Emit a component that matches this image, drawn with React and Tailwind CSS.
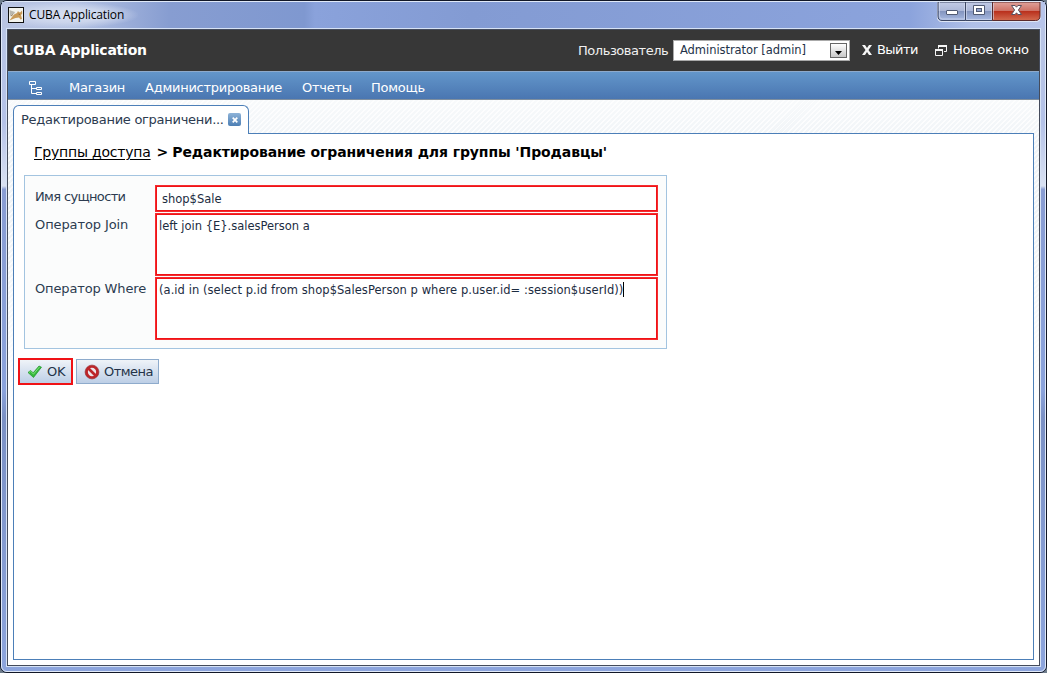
import React from "react";

function CatIcon() {
  return (
    <svg width="16" height="16" viewBox="0 0 16 16" className="shrink-0">
      <rect x="0.5" y="0.5" width="15" height="15" fill="#f4f4ee" stroke="#111" />
      <path d="M1.500 3l2.500 1 3 1-1 2-3 1-1 2z" fill="#b9b7ad" />
      <path d="M1.500 13.500L4 10l2-2.500L9 6l1-2 1 1.300h1.500L14 3.500l.3 3L13 8l1 4-1.500.5L11 10.500 7.500 11 5 12z" fill="#c99a57" />
      <path d="M3 9l2-1.500M10.500 7l1.500.5" stroke="#7d5a30" strokeWidth=".8" fill="none" />
    </svg>
  );
}

function WindowControls() {
  return (
    <svg width="104" height="20" viewBox="0 0 104 20">
      <defs>
        <linearGradient id="glass" x1="0" y1="0" x2="0" y2="1">
          <stop offset="0" stopColor="#c2cbe6" />
          <stop offset=".48" stopColor="#abb7d8" />
          <stop offset=".5" stopColor="#8394be" />
          <stop offset="1" stopColor="#a9bbe3" />
        </linearGradient>
        <linearGradient id="closeRed" x1="0" y1="0" x2="0" y2="1">
          <stop offset="0" stopColor="#e0a29b" />
          <stop offset=".46" stopColor="#cf7468" />
          <stop offset=".5" stopColor="#b92f1c" />
          <stop offset="1" stopColor="#d36c50" />
        </linearGradient>
      </defs>
      <path d="M.5 0v15q0 4.500 4 4.500H99q4.500 0 4.500-4.500V0" fill="#dfe6f6" stroke="#dfe6f6" />
      <path d="M1 0v14q0 4.500 4 4.500H28.500V0z" fill="url(#glass)" stroke="#3c4764" />
      <path d="M28.500 0h27v18.500h-27z" fill="url(#glass)" stroke="#3c4764" />
      <path d="M55.500 0v18.500H98.500q4.500 0 4.500-4.500V0z" fill="url(#closeRed)" stroke="#5b2a2c" />
      <path d="M2.500 0v14q0 3 3 3H27.500V1M29.500 1v16.500h25V1M56.500 1v16.500" fill="none" stroke="#d7def0" strokeOpacity=".6" />
      <rect x="9.500" y="8.500" width="11" height="4" rx=".5" fill="#fff" stroke="#505a73" />
      <path d="M36.500 3.500h11v9h-11z" fill="#fff" stroke="#505a73" />
      <rect x="39.500" y="6.500" width="5" height="3" fill="#93a4ce" stroke="#505a73" />
      <path d="M74.500 3.500h3.600l1.400 1.700 1.400-1.700h3.600l-3.100 4.500 3.100 4.500h-3.600l-1.400-1.700-1.400 1.700h-3.600l3.100-4.500z" fill="#fff" stroke="#59505f" />
    </svg>
  );
}

function TitleBar() {
  return (
    <div className="flex h-[26px] shrink-0 items-start justify-between bg-[linear-gradient(90deg,#bac5e3_0%,#b4c2e3_7%,#879dd1_16%,#7f98d0_29%,#8aa2db_30%,#839bd3_45%,#8ba3dc_87%,#b0c0e8_93%,#b8c5ea_100%)] pl-1.5">
      <div className="flex h-[26px] w-[130px] items-center gap-[5px] bg-[radial-gradient(ellipse_at_45%_50%,#d9e0f1_0%,#cbd5ec_40%,transparent_72%)]">
        <CatIcon />
        <span className="whitespace-nowrap font-['Open_Sans',sans-serif] text-[12px] leading-4 tracking-[-0.140px] text-black">CUBA Application</span>
      </div>
      <div className="mr-[4px] h-5"><WindowControls /></div>
    </div>
  );
}

function Header() {
  return (
    <div className="flex h-[41px] shrink-0 items-center bg-[#373737] pb-px text-[13px] text-white">
      <span className="ml-[5px] whitespace-nowrap text-[14px] font-bold tracking-[-0.220px]">CUBA Application</span>
      <span className="ml-auto mr-[5px] w-[90px] whitespace-nowrap pt-px tracking-[-0.450px] text-[#f0f0f0]">Пользователь</span>
      <div className="mt-px flex h-[21px] w-[177px] items-center justify-between border border-[#aaa] bg-white pl-1.5 pr-[2px] text-[11.500px] text-[#233248]">
        <span className="whitespace-nowrap tracking-[-0.050px]">Administrator [admin]</span>
        <span className="flex h-[15px] w-[17px] items-center justify-center border border-[#666] bg-gradient-to-b from-white to-[#c8c8c8]">
          <svg width="7" height="4" className="mt-1"><path d="M0 0h7L3.500 4z" fill="#000" /></svg>
        </span>
      </div>
      <svg className="ml-3 mr-[5px] shrink-0" width="10" height="10" viewBox="0 0 10 10">
        <path d="M0 0h3l2 3 2-3h3L6.500 5l3.500 5H7L5 7l-2 3H0l3.500-5z" fill="#f5f5f5" />
      </svg>
      <span className="w-[41px] whitespace-nowrap pb-px tracking-[-0.550px]">Выйти</span>
      <svg className="ml-[17px] mr-1.5 shrink-0" width="12" height="11" viewBox="0 0 12 11" fill="none" stroke="#f5f5f5">
        <path d="M3.500 3.500V1M11.500 1v5.500H9" />
        <path d="M3 1h9" strokeWidth="2" />
        <path d="M.5 4v6.500h7V4" />
        <path d="M0 5h8" strokeWidth="2" />
      </svg>
      <span className="mr-[10px] w-[76px] whitespace-nowrap pb-px tracking-[-0.200px]">Новое окно</span>
    </div>
  );
}

function MenuBar() {
  return (
    <div className="flex h-[29px] shrink-0 items-center border-b border-t border-b-[#7f8f9f] border-t-[#8eaacb] bg-gradient-to-b from-[#6396ca] to-[#4a76b1] pt-[4px] text-[13px] tracking-[-0.250px] text-white">
      <svg className="ml-[21px] mr-[26px] shrink-0" width="14" height="16" viewBox="0 0 14 16" fill="none" stroke="#fff">
        <path d="M.5 1.500h6v3h-6zM2.500 4.500v9h5M2.500 8.500h5M7.500 7.500h5v2h-5zM7.500 12.500h5v2h-5z" />
      </svg>
      <span className="w-[76px] whitespace-nowrap">Магазин</span>
      <span className="w-[157px] whitespace-nowrap">Администрирование</span>
      <span className="w-[69px] whitespace-nowrap">Отчеты</span>
      <span className="whitespace-nowrap">Помощь</span>
    </div>
  );
}

function Tab() {
  return (
    <div className="relative mb-[-1px] flex h-[29px] w-[236px] items-center rounded-t-[6px] border border-b-0 border-[#4c7fb8] bg-white pl-[7px] text-[13px] text-[#2c3b50]">
      <span className="w-[207px] whitespace-nowrap tracking-[-0.280px]">Редактирование ограничени...</span>
      <span className="mb-px flex h-[13px] w-[13px] items-center justify-center rounded-[2px] bg-gradient-to-b from-[#8eb3d8] to-[#4d7fb4]">
        <svg width="6" height="6" viewBox="0 0 6 6"><path d="M.7.7l4.600 4.600M5.300.7L.7 5.300" stroke="#fff" strokeWidth="1.700" /></svg>
      </span>
    </div>
  );
}

function Field({ label, labelStyle, height, children }) {
  return (
    <div className="flex items-start">
      <span className={"mt-1 w-[120px] shrink-0 whitespace-nowrap text-[13px] leading-4 text-[#2c3b50] " + labelStyle}>{label}</span>
      <div className={"w-[503px] border-2 border-[#f01216] bg-white text-[11.500px] leading-4 text-[#1c2c42] outline-1 -outline-offset-1 outline-[#ff6b6b]/30 " + height}>{children}</div>
    </div>
  );
}

function EditForm() {
  return (
    <div className="ml-[10px] mt-[13px] flex h-[174px] w-[643px] flex-col gap-[1px] border border-[#a3c4e0] bg-[#fbfcfc] pl-[10px] pt-[9px]">
      <Field label="Имя сущности" labelStyle="tracking-[-0.650px]" height="h-[27px] pl-[5px] pt-[4px]">shop$Sale</Field>
      <Field label="Оператор Join" labelStyle="tracking-[-0.100px]" height="h-[63px] pl-[2px] pt-[3px]">left join {"{E}"}.salesPerson a</Field>
      <Field label="Оператор Where" labelStyle="tracking-[-0.140px]" height="h-[63px] pl-[2px] pt-[3px]">
        <span className="inline-block h-[15px] whitespace-nowrap border-r border-black leading-4 tracking-[0.055px]">(a.id in (select p.id from shop$SalesPerson p where p.user.id= :session$userId))</span>
      </Field>
    </div>
  );
}

function Actions() {
  return (
    <div className="ml-1 mt-[9px] flex items-center gap-[3px] text-[13px] text-[#233248]">
      <div className="flex h-[27px] w-[55px] items-center gap-1 border-2 border-[#f01216] bg-gradient-to-b from-[#eff3f8] to-[#bdcfe6] pl-[7px]">
        <svg width="16" height="16" viewBox="0 0 16 16">
          <path d="M1 8.500L3.500 6.500l2.700 2.300L12 2l2.500 1.200L6.500 13.500z" fill="#35b93c" stroke="#20932b" strokeWidth=".7" />
          <path d="M2 8.500L3.500 7.300l3 2.700L12.500 3" stroke="#7ddf79" fill="none" />
        </svg>
        <span className="tracking-[-0.300px]">OK</span>
      </div>
      <div className="flex h-[25px] w-[83px] items-center gap-1 border border-[#8eabcc] bg-gradient-to-b from-[#eff3f8] to-[#bdcfe6] pl-[7px]">
        <svg width="16" height="16" viewBox="0 0 16 16">
          <circle cx="8" cy="8" r="5.500" fill="#ece6ea" stroke="#bd2529" strokeWidth="2.700" />
          <path d="M4 4l8 8" stroke="#bd2529" strokeWidth="2.700" />
          <circle cx="8" cy="8" r="6.900" fill="none" stroke="#8e1519" strokeWidth=".6" />
        </svg>
        <span className="tracking-[-0.500px]">Отмена</span>
      </div>
    </div>
  );
}

export default function App() {
  return (
    <div className="h-[673px] w-[1047px] overflow-hidden bg-[#6f7d8c] font-['DejaVu_Sans',sans-serif]">
      <div className="h-full rounded-[7px] border border-[#111727] bg-[#8fa6d9]">
        <div className="flex h-full flex-col rounded-[6px] border border-[#e0e9f8] bg-[linear-gradient(180deg,#bac6e4_0%,#b4c2e8_18%,#d9e1f2_27.500%,#899dd3_28%,#8ba3dc_58%,#7b91c5_62%,#8da5dd_100%)]">
          <TitleBar />
          <div className="mx-1 mb-1 flex min-h-0 flex-1 flex-col border border-[#d6e2f5]">
            <div className="flex min-h-0 flex-1 flex-col border border-[#444b5b] bg-white">
              <Header />
              <MenuBar />
              <div className="flex min-h-0 flex-1 flex-col bg-[linear-gradient(180deg,#ffffffa0_0%,#ffffff20_8%,#ffffff20_20%,#fff_60%),repeating-linear-gradient(135deg,#fbfcfd_0px,#fbfcfd_1.400px,#edf2f6_1.400px,#edf2f6_3.540px)] pb-[5px] pl-[5px] pr-[5px] pt-[5px]">
                <Tab />
                <div className="min-h-0 flex-1 border border-[#4c7fb8] bg-white">
                  <div className="ml-5 mt-[8px] flex h-5 items-center text-[14px] leading-5 text-black">
                    <span className="mr-[6px] whitespace-nowrap tracking-[-0.220px] underline underline-offset-2">Группы доступа</span>
                    <span className="mr-[4px] font-bold">&gt;</span>
                    <span className="whitespace-nowrap font-bold tracking-[-0.100px]">Редактирование ограничения для группы 'Продавцы'</span>
                  </div>
                  <EditForm />
                  <Actions />
                </div>
              </div>
            </div>
          </div>
        </div>
      </div>
    </div>
  );
}
